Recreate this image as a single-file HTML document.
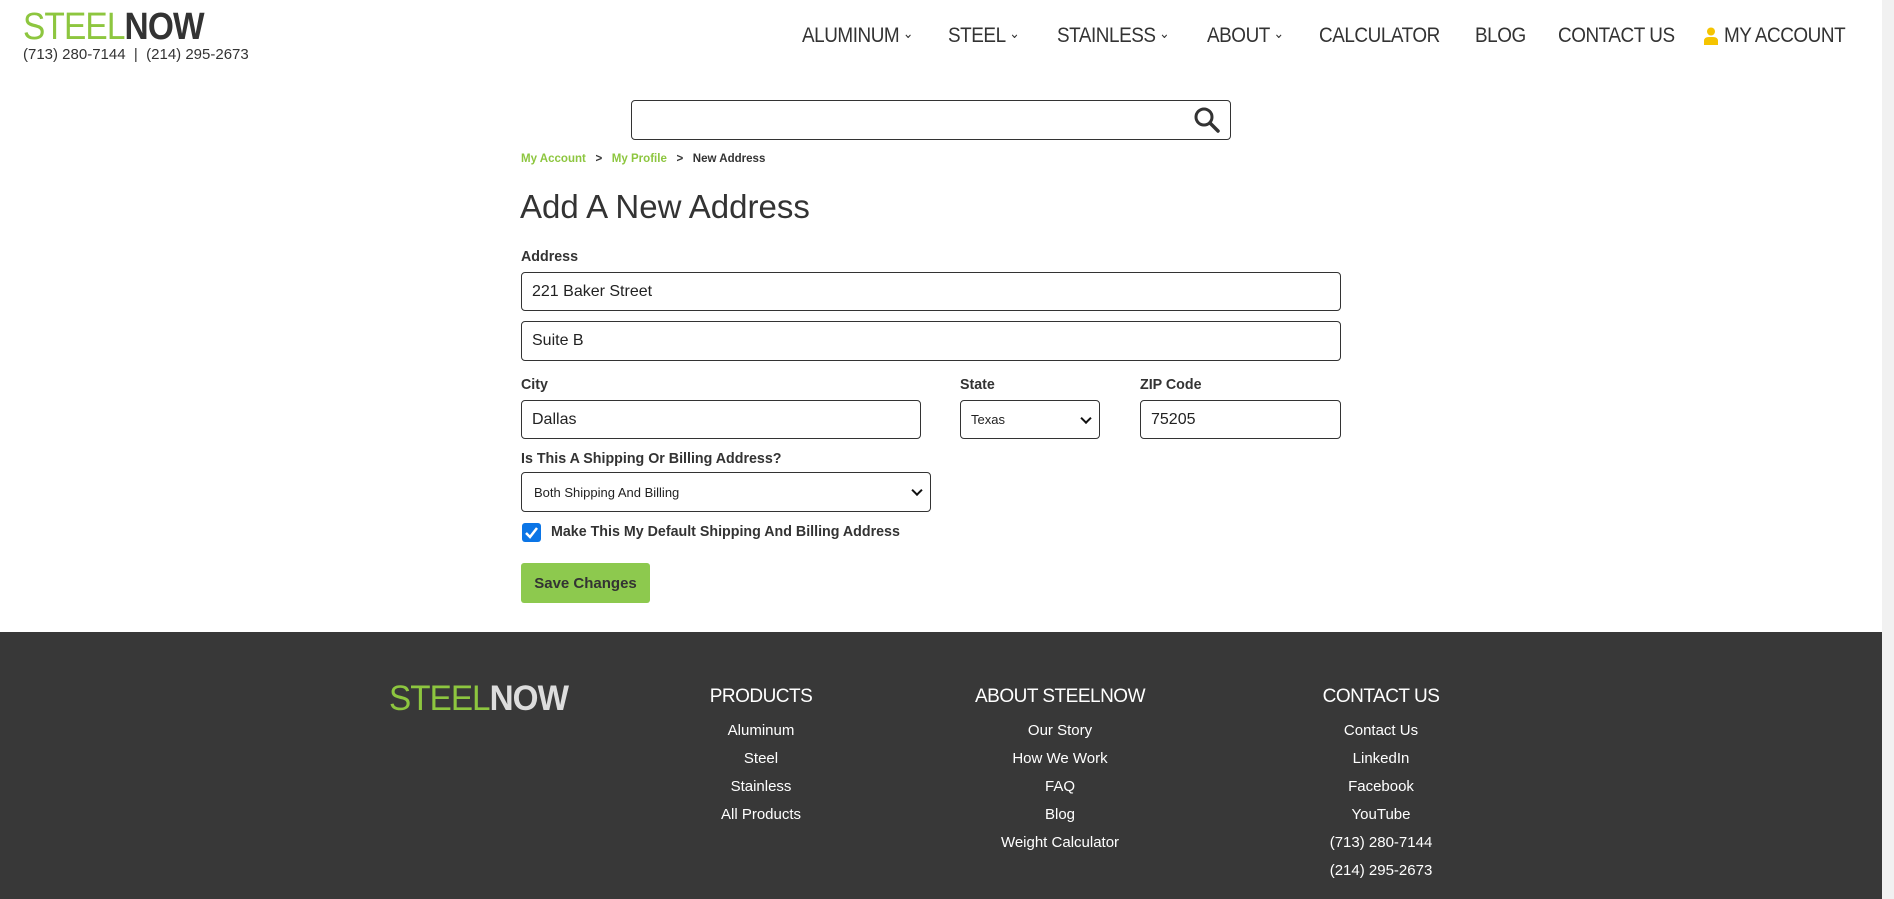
<!DOCTYPE html>
<html><head><meta charset="utf-8"><style>
*{box-sizing:border-box;margin:0;padding:0}
body{width:1894px;height:899px;overflow:hidden;background:#fff;font-family:"Liberation Sans",sans-serif;color:#333;position:relative}
.a{position:absolute;white-space:nowrap}
.nav{top:24px;font-size:21px;color:#333;letter-spacing:-0.5px;transform:scaleX(.9);transform-origin:left}
.car{font-size:14px;margin-left:4px;vertical-align:4px}
.inp{position:absolute;border:1px solid #333;border-radius:4px;background:#fff;font-size:16px;padding-left:10px;display:flex;align-items:center;color:#222}
.lbl{position:absolute;font-size:15px;font-weight:bold;color:#333;transform:scaleX(.95);transform-origin:left}
.sel:after{content:"";position:absolute;right:9px;top:50%;width:6px;height:6px;border-right:2px solid #111;border-bottom:2px solid #111;transform:translateY(-70%) rotate(45deg)}
footer{position:absolute;left:0;top:632px;width:1882px;height:267px;background:#383838}
.fh{position:absolute;top:54px;font-size:19px;color:#fff;transform:translateX(-50%);letter-spacing:-.5px}
.fl{position:absolute;font-size:15px;color:#fff;transform:translateX(-50%);white-space:nowrap}
</style></head><body>
<div class="a" style="left:23px;top:6px;font-size:38px;letter-spacing:-1px;transform:scaleX(.88);transform-origin:left"><span style="color:#8dc63f;font-weight:normal">STEEL</span><span style="color:#333;font-weight:bold">NOW</span></div>
<div class="a" style="left:23px;top:46px;font-size:15px;color:#333">(713) 280-7144 &nbsp;| &nbsp;(214) 295-2673</div>

<div class="a nav" style="left:802px">ALUMINUM<span class="car">&#8964;</span></div>
<div class="a nav" style="left:948px">STEEL<span class="car">&#8964;</span></div>
<div class="a nav" style="left:1057px">STAINLESS<span class="car">&#8964;</span></div>
<div class="a nav" style="left:1207px">ABOUT<span class="car">&#8964;</span></div>
<div class="a nav" style="left:1319px">CALCULATOR</div>
<div class="a nav" style="left:1475px">BLOG</div>
<div class="a nav" style="left:1558px">CONTACT US</div>
<svg class="a" style="left:1704px;top:27px" width="14" height="18" viewBox="0 0 14 18"><circle cx="7" cy="4.5" r="4" fill="#f5c400"/><path d="M0 18 V14 Q0 10 5 10 H9 Q14 10 14 14 V18Z" fill="#f5c400"/></svg>
<div class="a nav" style="left:1724px">MY ACCOUNT</div>

<div class="a" style="left:1882px;top:0;width:12px;height:899px;background:#f1f1f1"></div>

<div class="a" style="left:631px;top:100px;width:600px;height:40px;border:1px solid #333;border-radius:4px"></div>
<svg class="a" style="left:1193px;top:106px" width="28" height="28" viewBox="0 0 28 28"><circle cx="11" cy="11" r="8" fill="none" stroke="#333" stroke-width="3"/><path d="M17 17 L25 25" stroke="#333" stroke-width="3.5" stroke-linecap="round"/></svg>

<div class="a" style="left:521px;top:151px;font-size:12px;font-weight:bold;transform:scaleX(.96);transform-origin:left"><span style="color:#8dc63f">My Account</span> &nbsp; &gt; &nbsp; <span style="color:#8dc63f">My Profile</span> &nbsp; &gt; &nbsp; <span style="color:#333">New Address</span></div>
<div class="a" style="left:520px;top:188px;font-size:33px;color:#333">Add A New Address</div>

<div class="lbl" style="left:521px;top:248px">Address</div>
<div class="inp" style="left:521px;top:272px;width:820px;height:39px">221 Baker Street</div>
<div class="inp" style="left:521px;top:321px;width:820px;height:40px">Suite B</div>
<div class="lbl" style="left:521px;top:376px">City</div>
<div class="lbl" style="left:960px;top:376px">State</div>
<div class="lbl" style="left:1140px;top:376px">ZIP Code</div>
<div class="inp" style="left:521px;top:400px;width:400px;height:39px">Dallas</div>
<div class="inp sel" style="left:960px;top:400px;width:140px;height:39px;font-size:13px">Texas</div>
<div class="inp" style="left:1140px;top:400px;width:201px;height:39px">75205</div>
<div class="lbl" style="left:521px;top:450px">Is This A Shipping Or Billing Address?</div>
<div class="inp sel" style="left:521px;top:472px;width:410px;height:40px;font-size:13px;padding-left:12px">Both Shipping And Billing</div>
<div class="a" style="left:522px;top:523px;width:19px;height:19px;background:#0b75e6;border-radius:3px"><svg width="19" height="19" viewBox="0 0 19 19"><path d="M4 10 L8 14 L15 5" fill="none" stroke="#fff" stroke-width="2.5"/></svg></div>
<div class="lbl" style="left:551px;top:523px">Make This My Default Shipping And Billing Address</div>
<div class="a" style="left:521px;top:563px;width:129px;height:40px;background:#8dc94e;border-radius:3px;font-size:15px;font-weight:bold;color:#333;display:flex;align-items:center;justify-content:center">Save Changes</div>

<footer>
<div class="a" style="left:389px;top:47px;font-size:35px;letter-spacing:-1px;transform:scaleX(.95);transform-origin:left"><span style="color:#8dc63f">STEEL</span><span style="color:#ddd;font-weight:bold">NOW</span></div>
<div class="fh" style="left:761px">PRODUCTS</div>
<div class="fh" style="left:1060px">ABOUT STEELNOW</div>
<div class="fh" style="left:1381px">CONTACT US</div>
<div class="fl" style="left:761px;top:90px">Aluminum</div>
<div class="fl" style="left:761px;top:118px">Steel</div>
<div class="fl" style="left:761px;top:146px">Stainless</div>
<div class="fl" style="left:761px;top:174px">All Products</div>
<div class="fl" style="left:1060px;top:90px">Our Story</div>
<div class="fl" style="left:1060px;top:118px">How We Work</div>
<div class="fl" style="left:1060px;top:146px">FAQ</div>
<div class="fl" style="left:1060px;top:174px">Blog</div>
<div class="fl" style="left:1060px;top:202px">Weight Calculator</div>
<div class="fl" style="left:1381px;top:90px">Contact Us</div>
<div class="fl" style="left:1381px;top:118px">LinkedIn</div>
<div class="fl" style="left:1381px;top:146px">Facebook</div>
<div class="fl" style="left:1381px;top:174px">YouTube</div>
<div class="fl" style="left:1381px;top:202px">(713) 280-7144</div>
<div class="fl" style="left:1381px;top:230px">(214) 295-2673</div>
</footer>
</body></html>
